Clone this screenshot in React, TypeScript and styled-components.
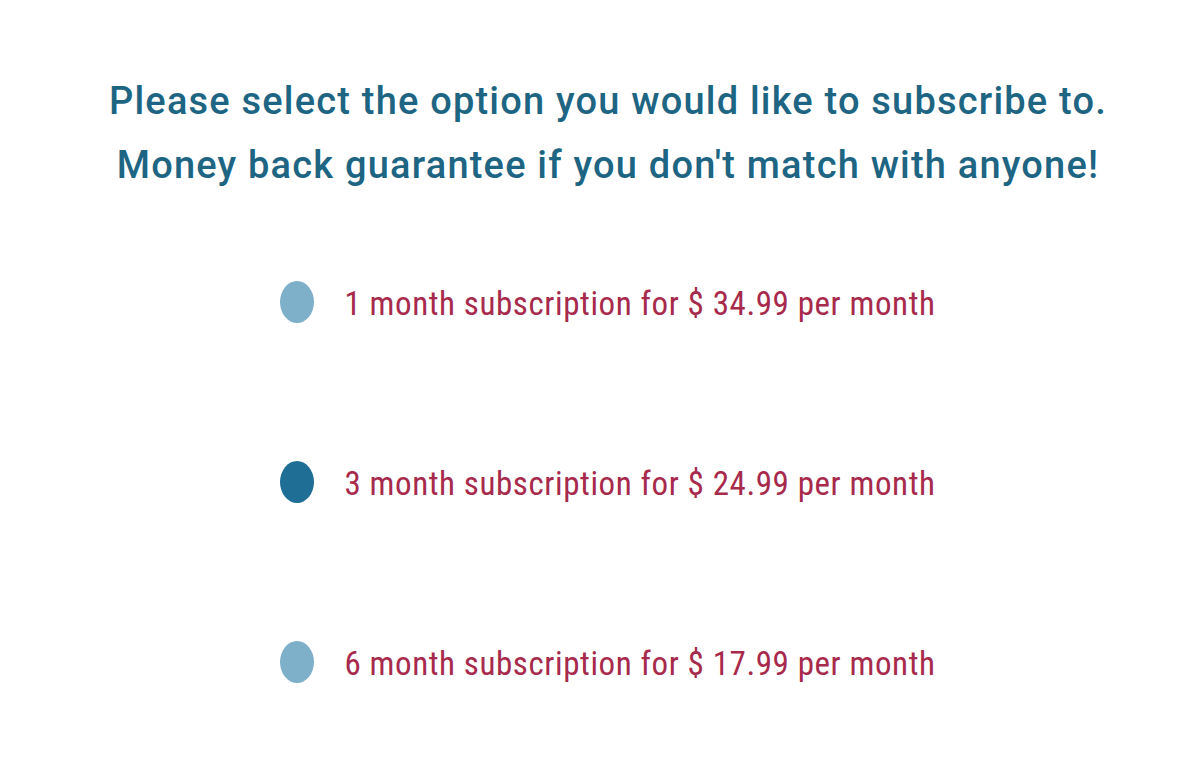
import React, { useState } from 'react';
import styled, { createGlobalStyle } from 'styled-components';

const GlobalStyle = createGlobalStyle`
  body {
    margin: 0;
    background: #ffffff;
    font-family: 'Roboto Condensed', 'Liberation Sans', sans-serif;
  }
`;

const Page = styled.div`
  display: flex;
  flex-direction: column;
  align-items: center;
  padding: 69px 0 0 16px;
`;

const Heading = styled.h1`
  margin: 0;
  font-family: Roboto, 'Liberation Sans', sans-serif;
  font-size: 38px;
  font-weight: 500;
  line-height: 64px;
  letter-spacing: 1.2px;
  color: #1d6583;
  text-align: center;
  white-space: nowrap;
`;

const OptionList = styled.div`
  display: flex;
  flex-direction: column;
  gap: 138px;
  margin-top: 84px;
`;

const Option = styled.label`
  display: flex;
  align-items: center;
  gap: 30px;
  height: 42px;
  cursor: pointer;
`;

const Dot = styled.span<{ $selected: boolean }>`
  width: 34px;
  height: 42px;
  border-radius: 50%;
  flex-shrink: 0;
  background: ${(p) => (p.$selected ? '#1f6e95' : '#7fb0c9')};
`;

const OptionText = styled.span`
  font-size: 33px;
  line-height: 42px;
  letter-spacing: 0.6px;
  color: #a72a4c;
  white-space: nowrap;
  padding-top: 4px;
`;

const plans = [
  { months: 1, price: '$ 34.99' },
  { months: 3, price: '$ 24.99' },
  { months: 6, price: '$ 17.99' }
];

export default function App() {
  const [selected, setSelected] = useState(3);

  return (
    <>
      <GlobalStyle />
      <Page>
        <Heading>
          Please select the option you would like to subscribe to.
          <br />
          Money back guarantee if you don't match with anyone!
        </Heading>
        <OptionList>
          {plans.map((plan) => (
            <Option key={plan.months} onClick={() => setSelected(plan.months)}>
              <Dot $selected={selected === plan.months} />
              <OptionText>
                {plan.months} month subscription for {plan.price} per month
              </OptionText>
            </Option>
          ))}
        </OptionList>
      </Page>
    </>
  );
}
